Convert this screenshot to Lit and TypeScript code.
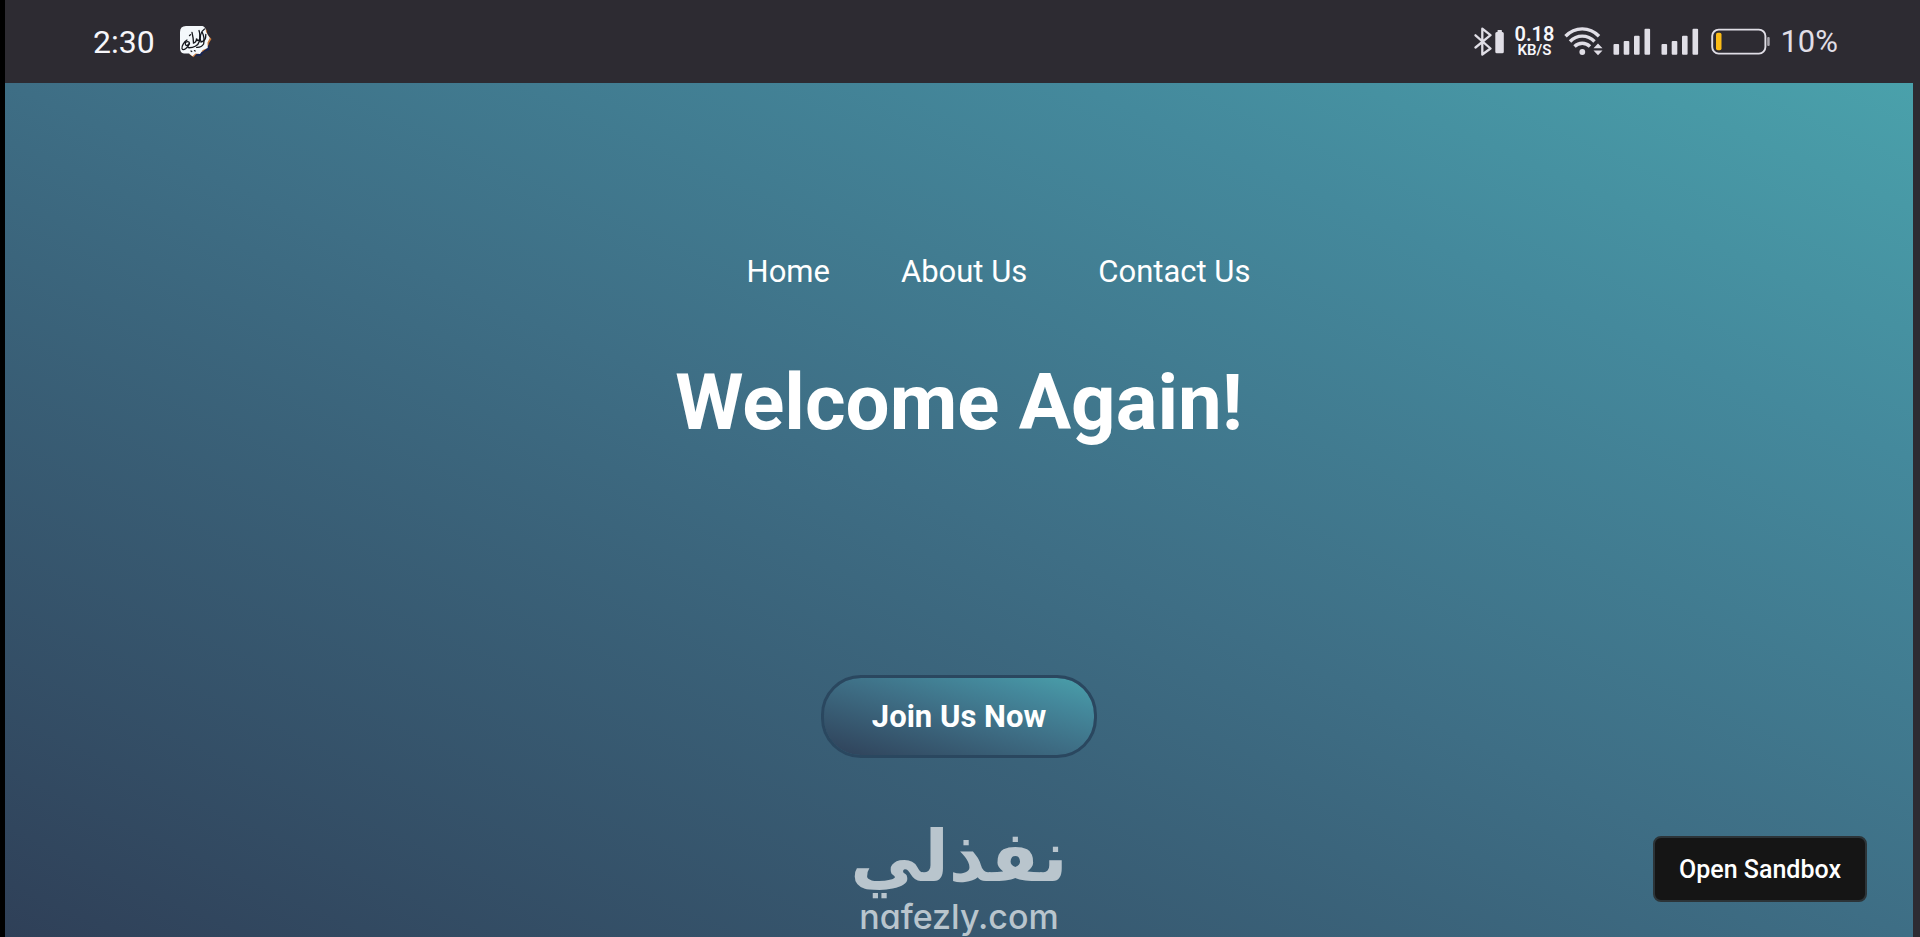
import { LitElement, html, css, svg } from "lit";
import { customElement } from "lit/decorators.js";

const signal = () => html`
  <svg width="38" height="29" viewBox="0 0 38 29" fill="currentColor" aria-hidden="true">
    ${[
      [0.5, 17],
      [10.7, 14],
      [21, 8.7],
      [31.5, 1.8],
    ].map(([x, y]) => svg`<rect x=${x} y=${y} width="5.6" height=${27.8 - y} rx="1"/>`)}
  </svg>
`;

@customElement("status-bar")
class StatusBar extends LitElement {
  static styles = css`
    :host {
      display: flex;
      align-items: center;
      justify-content: space-between;
      height: 83px;
      padding: 0 82px 0 88px;
      box-sizing: border-box;
      background: #2d2b32;
      color: #e0dee6;
      font: 450 31px/40px Roboto, sans-serif;
    }
    .group {
      display: flex;
      align-items: center;
      gap: 10px;
    }
    .left {
      gap: 25px;
      color: #f6f6fa;
    }
    .time {
      font-size: 32px;
    }
    .rate {
      display: flex;
      flex-direction: column;
      align-items: center;
      color: #f6f6fa;
      font-weight: 600;
      font-size: 20px;
      line-height: 17px;
    }
    .unit {
      font-size: 15px;
      line-height: 15px;
    }
    svg {
      display: block;
    }
  `;

  render() {
    return html`
      <div class="group left">
        <span class="time">2:30</span>
        <svg width="32" height="32" viewBox="0 0 32 32" aria-hidden="true">
          <path fill="#c97b3f" d="M22 2.5l4.500 1.200 1 5 4 4.300-2.800 4.500.3 5-5 1.800-2.500 4.500-5-.5-3 3-4-3z"/>
          <path fill="#172452" d="M31 15l-2 3.500.3 5.500-5 1.800L21 30l-5-.3-2 1.800 2-3 9-4z"/>
          <path fill="#f4f8fb" d="M6 0h16.500Q26 1 26 6l3.800 6-2.300 4.500.2 5.500-5 2-2.700 4-4.500-.5-3 2.800L9 27.500H4Q0 27 0 22V6Q0 0 6 0z"/>
          <g fill="none" stroke="#14161c" stroke-width="1.300" stroke-linecap="round">
            <path d="M7 14c-3 2-5.500 6-5 8.500 1 3 6-.5 7.500-5"/>
            <path d="M5.500 16.500c3-2 5 0 3 2s-4 .5-3-2"/>
            <path d="M12 6.500c1 4 1.500 7 1.500 10.500 2-.5 3-2 3-4.500.8 2 1.500 2.500 2.500 1.500"/>
            <path d="M19 4.500c1.500 4 .8 8 .3 11-1 4-6 6.500-11 6.200"/>
            <path d="M24.500 3c-4.500 3-5 9-3.500 13 3-.5 5-3 4.800-7.500"/>
            <path d="M22.300 6.500c1.500 3 2.200 7.500 1.300 11.500-1.400 2.500-4 3.500-7 3.300"/>
            <path d="M11 25l.8.5M14.500 24.700l.7.3M9.500 9.500l1-.8"/>
          </g>
        </svg>
      </div>
      <div class="group">
        <svg width="30" height="29" viewBox="0 0 30 29" aria-hidden="true">
          <path fill="none" stroke="currentColor" stroke-width="2.300" stroke-linejoin="round" stroke-linecap="round" d="M1.500 8.300L16.500 21.500L8.300 27.500V1.700L16.500 8.200L1.500 20.500"/>
          <path fill="currentColor" d="M23.500 5V3.600q0-.6.6-.6h3.200q.6 0 .6.6V5h.4q1.500 0 1.500 1.500v18.200q0 1.500-1.500 1.500h-5.500q-1.500 0-1.500-1.500V6.500q0-1.500 1.500-1.500z"/>
        </svg>
        <span class="rate"><span>0.18</span><span class="unit">KB/S</span></span>
        <svg width="39" height="29" viewBox="0 0 39 29" aria-hidden="true">
          <g fill="none" stroke="currentColor" stroke-width="3.400">
            <path d="M1.500 9.200C11 -.6 25.500 -.6 35 9.200"/>
            <path d="M6 14.500C13 7.300 23.500 7.300 30.500 14.500"/>
            <path d="M10.500 19.400c4.500-4.300 11-4.300 15.500 0"/>
          </g>
          <circle cx="18.300" cy="25" r="2.900" fill="currentColor"/>
          <path fill="currentColor" d="M34 16.500l4.500 4.800h-9zM34 28.300l4.500-4.800h-9z"/>
        </svg>
        ${signal()} ${signal()}
        <svg width="61" height="29" viewBox="0 0 61 29" aria-hidden="true">
          <rect x="3.200" y="2.600" width="53.200" height="24" rx="6.500" fill="none" stroke="currentColor" stroke-width="1.900"/>
          <rect x="7" y="5.700" width="5.500" height="17.600" rx="1.800" fill="#fbbc16"/>
          <rect x="58.200" y="10" width="2.500" height="9" rx="1" fill="#a9a7ae"/>
        </svg>
        <span>10%</span>
      </div>
    `;
  }
}

@customElement("app-root")
class AppRoot extends LitElement {
  static styles = css`
    :host {
      --sea: linear-gradient(to top right, #2f4058, #3e6e85 50%, #44899c 78%, #4aa1ab);
      display: flex;
      flex-direction: column;
      min-height: 100vh;
      box-sizing: border-box;
      border-left: 5px solid #000;
      font-family: Roboto, sans-serif;
      color: #fff;
    }
    main {
      position: relative;
      flex: 1;
      display: flex;
      flex-direction: column;
      align-items: center;
      border-right: 7px solid #2d2b32;
      background: var(--sea);
      background-clip: padding-box;
    }
    nav {
      display: flex;
      gap: 71px;
      margin-top: 169px;
      padding-left: 79px;
      font-size: 31px;
      line-height: 40px;
    }
    a {
      color: inherit;
      text-decoration: none;
    }
    h1 {
      margin: 65px 0 0;
      font-size: 78px;
      line-height: 92px;
      font-weight: 700;
    }
    .join {
      margin-top: 226px;
      padding: 19px 48px;
      border: 3px solid #2a475f;
      border-radius: 40px;
      background: var(--sea);
      background-clip: padding-box;
      color: inherit;
      font: 700 31px/39px Roboto, sans-serif;
    }
    .mark {
      display: flex;
      flex-direction: column;
      align-items: center;
      margin-top: 56px;
      color: #b9c5cd;
    }
    .arabic {
      font: 700 71px/86px "DejaVu Sans", sans-serif;
    }
    .latin {
      font: 500 34px/34px Inter, sans-serif;
      font-feature-settings: "cv11";
    }
    .sandbox {
      position: absolute;
      right: 46px;
      bottom: 35px;
      padding: 17px 24px 15px;
      border: 2px solid #2c3438;
      border-radius: 8px;
      background: #151515;
      color: inherit;
      font: 500 25px/30px Roboto, sans-serif;
    }
  `;

  render() {
    return html`
      <status-bar></status-bar>
      <main>
        <nav>
          <a href="#home">Home</a>
          <a href="#about">About Us</a>
          <a href="#contact">Contact Us</a>
        </nav>
        <h1>Welcome Again!</h1>
        <button class="join" type="button">Join Us Now</button>
        <div class="mark">
          <span class="arabic" lang="ar" dir="rtl">نفذلي</span>
          <span class="latin">nafezly.com</span>
        </div>
        <button class="sandbox" type="button">Open Sandbox</button>
      </main>
    `;
  }
}
